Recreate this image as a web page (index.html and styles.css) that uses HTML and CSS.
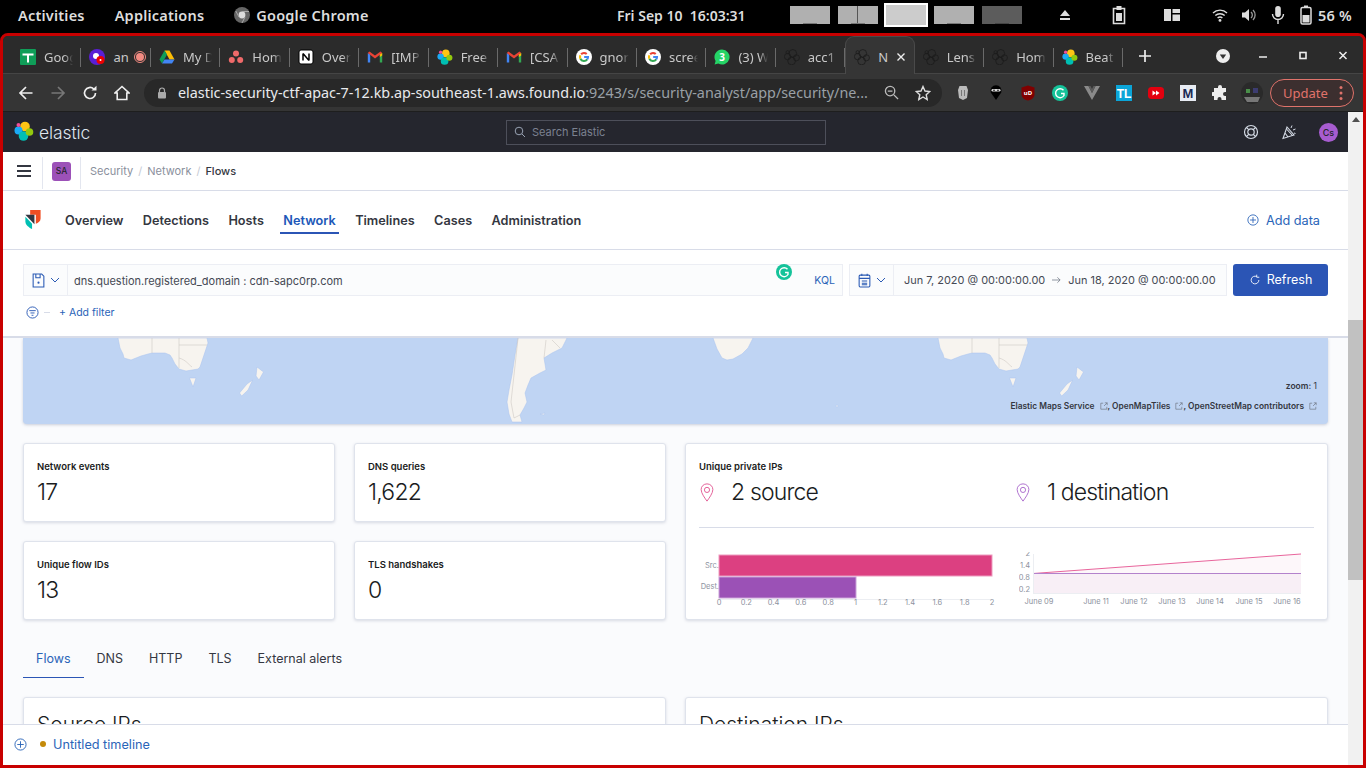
FILE: index.html
```html
<!DOCTYPE html>
<html lang="en">
<head>
<meta charset="utf-8">
<title>Network - Flows</title>
<link rel="stylesheet" href="styles.css">
</head>
<body>
<svg class="defs" width="0" height="0" aria-hidden="true">
  <defs>
    <symbol id="elk" viewBox="0 0 20 20">
      <circle class="b1" cx="11" cy="5.500" r="4.800"/>
      <circle class="b2" cx="4.500" cy="9.500" r="4"/>
      <circle class="b3" cx="9.500" cy="15" r="4.800"/>
      <circle class="b4" cx="15.500" cy="11" r="3.800"/>
      <circle class="b5" cx="4.500" cy="4" r="2"/>
    </symbol>
    <symbol id="g" viewBox="0 0 20 20">
      <circle cx="10" cy="10" r="10" fill="#fff"/>
      <path d="M6.400 6.600A5 5 0 0 1 13.400 6.300" fill="none" stroke="#ea4335" stroke-width="2.600"/>
      <path d="M5.500 12.200a5 5 0 0 1 0-4.400" fill="none" stroke="#fbbc05" stroke-width="2.600"/>
      <path d="M14 13a5 5 0 0 1-8.500-.8" fill="none" stroke="#34a853" stroke-width="2.600"/>
      <path d="M10.200 10H15a5 5 0 0 1-1 3" fill="none" stroke="#4285f4" stroke-width="2.600"/>
    </symbol>
    <symbol id="m" viewBox="0 0 20 16">
      <path d="M1 15V3l3 2v10z" fill="#4285f4"/>
      <path d="M19 15V3l-3 2v10z" fill="#34a853"/>
      <path d="M1 3l9 7 9-7-2-2-7 5-7-5z" fill="#ea4335"/>
      <path d="M16 5l3-2v3l-3 2z" fill="#fbbc05"/>
    </symbol>
    <symbol id="pin" viewBox="0 0 16 22">
      <path d="M8 1C4 1 1.200 4 1.200 7.600 1.200 12 6 18 8 21c2-3 6.800-9 6.800-13.400C14.800 4 12 1 8 1z" fill="none" stroke="currentColor" stroke-width="1"/>
      <circle cx="8" cy="8" r="3" fill="none" stroke="currentColor" stroke-width="1"/>
    </symbol>
    <symbol id="ext" viewBox="0 0 10 10">
      <path d="M4 1.500H1v7.500h7.500V6M5 5l4-4M6 1h3v3" fill="none" stroke="#69707d" stroke-width=".8"/>
    </symbol>
    <symbol id="plusc" viewBox="0 0 14 14">
      <circle cx="7" cy="7" r="6" fill="none" stroke="currentColor"/>
      <path d="M7 3.500v7M3.500 7h7" fill="none" stroke="currentColor"/>
    </symbol>
  </defs>
</svg>

<header class="panel">
  <div class="panel-left">
    <span>Activities</span>
    <span>Applications</span>
    <span class="app-name">
      <svg class="chrome-ico" viewBox="0 0 16 16"><circle cx="8" cy="8" r="8" fill="#666"/><circle cx="8" cy="8" r="3.400" fill="#ddd"/><path d="M8 4.500h7M5 10L1.800 4M11 10l-3 6" stroke="#aaa" fill="none"/></svg>
      Google Chrome
    </span>
  </div>
  <div class="panel-clock">Fri Sep 10&nbsp;&nbsp;16:03:31</div>
  <div class="workspaces">
    <span class="ws"><i></i></span>
    <span class="ws ws-split"><i></i></span>
    <span class="ws ws-current"></span>
    <span class="ws"><i></i></span>
    <span class="ws ws-dark"><i></i></span>
  </div>
  <div class="tray">
    <svg class="tray-eject" viewBox="0 0 12 12"><path d="M6 1l5 6H1zM1 9h10v2H1z" fill="#ddd"/></svg>
    <svg class="tray-clip" viewBox="0 0 14 20"><path d="M1.500 3.500h11v15h-11z" fill="none" stroke="#ddd" stroke-width="1.600"/><path d="M4.500 1h5v4h-5zM4 8h6v8H4z" fill="#ddd"/></svg>
    <svg class="tray-wm" viewBox="0 0 16 12"><path d="M0 0h7v12H0zM8.500 0H16v4H8.500zM8.500 5.500H16V12H8.500z" fill="#ddd"/></svg>
    <svg class="tray-wifi" viewBox="0 0 16 14"><path d="M1 5a10 10 0 0 1 14 0M3.300 7.500a7 7 0 0 1 9.400 0M5.600 10a3.600 3.600 0 0 1 4.800 0" fill="none" stroke="#ddd" stroke-width="1.400"/><circle cx="8" cy="12.400" r="1.400" fill="#ddd"/></svg>
    <svg class="tray-vol" viewBox="0 0 16 16"><path d="M1 5.500h3L8 2v12L4 10.500H1z" fill="#ddd"/><path d="M10 5a4 4 0 0 1 0 6M12 3a7 7 0 0 1 0 10" fill="none" stroke="#999" stroke-width="1.300"/></svg>
    <svg class="tray-mic" viewBox="0 0 14 20"><rect x="4.200" y="1" width="5.600" height="11" rx="2.800" fill="#ddd"/><path d="M1.500 9a5.500 5.500 0 0 0 11 0M7 14.500V19" fill="none" stroke="#ddd" stroke-width="1.400"/></svg>
    <svg class="tray-bat" viewBox="0 0 12 20"><path d="M4 .5h4v2H4z" fill="#ddd"/><rect x="1" y="2.500" width="10" height="16.500" rx="1.500" fill="none" stroke="#ddd" stroke-width="1.500"/><rect x="2.500" y="10" width="7" height="7.500" fill="#ddd"/></svg>
    <span class="bat-text">56 %</span>
  </div>
</header>

<div class="window">
  <div class="tabstrip">
    <div class="tab"><svg class="fav" viewBox="0 0 16 16"><rect width="16" height="16" rx="1" fill="#0f9d58"/><path d="M2.500 4.500h11v2h-11zM7 6h2v7.500H7z" fill="#fff"/></svg><span class="tab-t">Goog</span></div>
    <div class="tab"><svg class="fav" viewBox="0 0 16 16"><circle cx="8" cy="8" r="8" fill="#5a1fd6"/><circle cx="7" cy="7" r="3" fill="#fff"/><circle cx="11.500" cy="11" r="4" fill="#e00"/><circle cx="11.500" cy="11" r="1" fill="#fff"/></svg><span class="tab-t tab-short">an</span><svg class="fav-rec" viewBox="0 0 12 12"><circle cx="6" cy="6" r="5.500" fill="none" stroke="#f28b82"/><circle cx="6" cy="6" r="4" fill="#f28b82"/></svg></div>
    <div class="tab"><svg class="fav" viewBox="0 0 16 16"><path d="M5.500 1.500h5l5 9h-5z" fill="#fbbc05"/><path d="M5.500 1.500L.5 10.500l2.500 4 5-9z" fill="#0f9d58"/><path d="M3 14.500h10l2.500-4h-10z" fill="#4285f4"/></svg><span class="tab-t">My D</span></div>
    <div class="tab"><svg class="fav" viewBox="0 0 16 16"><circle cx="8" cy="4.500" r="3" fill="#f06a6a"/><circle cx="3.800" cy="11" r="3" fill="#f06a6a"/><circle cx="12.200" cy="11" r="3" fill="#f06a6a"/></svg><span class="tab-t">Hom</span></div>
    <div class="tab"><svg class="fav" viewBox="0 0 16 16"><rect x="1" y="1" width="14" height="14" rx="2" fill="#fff" stroke="#000"/><path d="M5 4.500v7M5 4.500l6 7M11 4.500v7" stroke="#000" stroke-width="1.500" fill="none"/></svg><span class="tab-t">Over</span></div>
    <div class="tab"><svg class="fav" viewBox="0 0 20 16"><use href="#m"/></svg><span class="tab-t">[IMP</span></div>
    <div class="tab"><svg class="fav" viewBox="0 0 20 20"><use href="#elk"/></svg><span class="tab-t">Free</span></div>
    <div class="tab"><svg class="fav" viewBox="0 0 20 16"><use href="#m"/></svg><span class="tab-t">[CSA</span></div>
    <div class="tab"><svg class="fav" viewBox="0 0 20 20"><use href="#g"/></svg><span class="tab-t">gnor</span></div>
    <div class="tab"><svg class="fav" viewBox="0 0 20 20"><use href="#g"/></svg><span class="tab-t">scree</span></div>
    <div class="tab"><svg class="fav" viewBox="0 0 16 16"><path d="M8 .5a7.500 7.500 0 0 0-6.400 11.400L.6 15.500l3.700-1A7.500 7.500 0 1 0 8 .5z" fill="#25d366"/><text x="8" y="11.500" class="wa-n">3</text></svg><span class="tab-t">(3) W</span></div>
    <div class="tab"><svg class="fav elk-dark" viewBox="0 0 20 20"><use href="#elk"/></svg><span class="tab-t">acc1</span></div>
    <div class="tab tab-active"><svg class="fav elk-dark" viewBox="0 0 20 20"><use href="#elk"/></svg><span class="tab-t tab-short">N</span><svg class="tab-x" viewBox="0 0 10 10"><path d="M1.500 1.500l7 7M8.500 1.500l-7 7" stroke="#eee" stroke-width="1.400"/></svg></div>
    <div class="tab"><svg class="fav elk-dark" viewBox="0 0 20 20"><use href="#elk"/></svg><span class="tab-t">Lens</span></div>
    <div class="tab"><svg class="fav elk-dark" viewBox="0 0 20 20"><use href="#elk"/></svg><span class="tab-t">Hom</span></div>
    <div class="tab"><svg class="fav" viewBox="0 0 20 20"><use href="#elk"/></svg><span class="tab-t">Beat</span></div>
    <svg class="newtab" viewBox="0 0 12 12"><path d="M6 0v12M0 6h12" stroke="#eee" stroke-width="1.700"/></svg>
    <div class="winctl">
      <svg class="tabsearch" viewBox="0 0 14 14"><circle cx="7" cy="7" r="7" fill="#eee"/><path d="M3.800 5.500h6.400L7 10z" fill="#333"/></svg>
      <svg class="wbtn" viewBox="0 0 10 10"><path d="M1 6h8" stroke="#eee" stroke-width="1.600"/></svg>
      <svg class="wbtn" viewBox="0 0 10 10"><rect x="2" y="1.500" width="6" height="6" fill="none" stroke="#eee" stroke-width="1.600"/></svg>
      <svg class="wbtn" viewBox="0 0 10 10"><path d="M1.500 1l7 7M8.500 1l-7 7" stroke="#eee" stroke-width="1.500"/></svg>
    </div>
  </div>

  <div class="toolbar">
    <div class="navbtns">
      <svg class="tb-ico" viewBox="0 0 16 16"><path d="M14.500 8H2M8 2L2 8l6 6" fill="none" stroke="#eee" stroke-width="1.700"/></svg>
      <svg class="tb-ico" viewBox="0 0 16 16"><path d="M1.500 8H14M8 2l6 6-6 6" fill="none" stroke="#777" stroke-width="1.700"/></svg>
      <svg class="tb-ico" viewBox="0 0 16 16"><path d="M13.500 8A5.500 5.500 0 1 1 11.800 4" fill="none" stroke="#eee" stroke-width="1.700"/><path d="M9.500 5.500H14.500V.8z" fill="#eee"/></svg>
      <svg class="tb-ico" viewBox="0 0 16 16"><path d="M8 1.500L1 8h2.200v6.500h9.600V8H15z" fill="none" stroke="#eee" stroke-width="1.600"/></svg>
    </div>
    <div class="omnibox">
      <svg class="lock" viewBox="0 0 10 12"><path d="M2.500 5V3.500a2.500 2.500 0 0 1 5 0V5" fill="none" stroke="#aaa" stroke-width="1.200"/><rect x="1" y="5" width="8" height="6.500" rx="1" fill="#aaa"/></svg>
      <span class="url">elastic-security-ctf-apac-7-12.kb.ap-southeast-1.aws.found.io<span class="url-dim">:9243/s/security-analyst/app/security/ne...</span></span>
      <svg class="omni-zoom" viewBox="0 0 16 16"><circle cx="6.500" cy="6.500" r="5" fill="none" stroke="#bbb" stroke-width="1.400"/><path d="M10.500 10.500L15 15M4 6.500h5" stroke="#bbb" stroke-width="1.400"/></svg>
      <svg class="omni-star" viewBox="0 0 16 16"><path d="M8 1.500l2 4.500 4.800.5-3.600 3.200 1 4.800L8 12l-4.200 2.500 1-4.800L1.200 6.500 6 6z" fill="none" stroke="#ddd" stroke-width="1.400"/></svg>
    </div>
    <div class="exts">
      <svg class="ext" viewBox="0 0 16 16"><path d="M4.500 1h7l1.500 4-1 8L8 15l-4-2-1-8z" fill="#bbb"/><path d="M6 5h1v6H6zM9 5h1v6H9z" fill="#777"/></svg>
      <svg class="ext" viewBox="0 0 16 16"><path d="M8 15L2.800 7.500a5.500 5.500 0 1 1 10.400 0z" fill="#000"/><rect x="3.500" y="4" width="9" height="2.600" rx="1.300" fill="#ddd"/><circle cx="6" cy="5.300" r=".8"/><circle cx="10" cy="5.300" r=".8"/></svg>
      <svg class="ext" viewBox="0 0 16 16"><path d="M8 0.500l6.500 2v7c0 3-3 5.500-6.500 6-3.500-.5-6.500-3-6.500-6v-7z" fill="#800000"/><text x="8" y="10" class="ext-ub">uD</text></svg>
      <svg class="ext" viewBox="0 0 16 16"><circle cx="8" cy="8" r="8" fill="#15c39a"/><path d="M11.500 5.200A4.500 4.500 0 1 0 12 10.500L12 8.500H9" fill="none" stroke="#fff" stroke-width="1.400"/></svg>
      <svg class="ext" viewBox="0 0 16 16"><path d="M0 1h4.500L8 8l3.500-7H16L8 15z" fill="#8a8a8a"/><path d="M4.500 1L8 8l3.500-7H9.500L8 4 6.500 1z" fill="#5c5c5c"/></svg>
      <svg class="ext" viewBox="0 0 16 16"><rect width="16" height="16" fill="#0ba5d8"/><text x="8" y="13" class="ext-tl">TL</text></svg>
      <svg class="ext" viewBox="0 0 16 16"><rect y="2" width="16" height="12" rx="3.500" fill="#e3000f"/><path d="M4.500 5.500L8 8 4.500 10.500zM8 5.500L11.500 8 8 10.500z" fill="#fff"/></svg>
      <svg class="ext" viewBox="0 0 16 16"><rect width="16" height="16" fill="#e8ecf3"/><text x="8" y="13" class="ext-m">M</text></svg>
      <svg class="ext" viewBox="0 0 16 16"><path d="M6 3V2a2 2 0 0 1 4 0v1h4v4h-1a2 2 0 0 0 0 4h1v4H9.500v-1a2 2 0 0 0-4 0v1H2v-4H1a2 2 0 0 1 0-4h1V3z" fill="#eee"/></svg>
      <svg class="avatar" viewBox="0 0 22 22"><circle cx="11" cy="11" r="11" fill="#2a2a2a"/><path d="M3 15h16l-2 5H6z" fill="#777"/><rect x="5" y="7" width="4" height="4" fill="#4a8f4a"/><rect x="12" y="6" width="5" height="5" fill="#3c3c70"/></svg>
    </div>
    <div class="update"><span>Update</span><svg class="dots" viewBox="0 0 4 16"><circle cx="2" cy="2.500" r="1.500"/><circle cx="2" cy="8" r="1.500"/><circle cx="2" cy="13.500" r="1.500"/></svg></div>
  </div>

  <div class="viewport">
    <div class="app">
      <div class="kbn-head">
        <div class="kbn-logo"><svg class="elk-logo" viewBox="0 0 20 20"><use href="#elk"/></svg><span>elastic</span></div>
        <div class="kbn-search">
          <svg class="search-ico" viewBox="0 0 12 12"><circle cx="5" cy="5" r="3.800" fill="none" stroke="#98a2b3"/><path d="M8 8l3 3" stroke="#98a2b3"/></svg>
          <span>Search Elastic</span>
        </div>
        <div class="kbn-icons">
          <svg class="kbn-ico" viewBox="0 0 16 16"><circle cx="8" cy="8" r="6.500" fill="none" stroke="#d4dae5" stroke-width="1.200"/><circle cx="8" cy="8" r="3.200" fill="none" stroke="#d4dae5" stroke-width="1.200"/><path d="M3.500 3.500l2.200 2.200M12.500 3.500l-2.200 2.200M3.500 12.500l2.200-2.200M12.500 12.500l-2.200-2.200" stroke="#d4dae5" stroke-width="1.200"/></svg>
          <svg class="kbn-ico" viewBox="0 0 16 16"><path d="M2 14.500L6 3l7 8zM4 9l3 4M6 5.500l5 5.500" fill="none" stroke="#d4dae5" stroke-width="1.100"/><path d="M10 4l1-2.500M12 6l2.500-1M13 9l1.500.5" stroke="#d4dae5"/></svg>
          <span class="user">Cs</span>
        </div>
      </div>

      <div class="crumbs">
        <div class="burger"><i></i><i></i><i></i></div>
        <div class="space-cell"><span class="space">SA</span></div>
        <nav class="crumb-list"><span>Security</span><b>/</b><span>Network</span><b>/</b><strong>Flows</strong></nav>
      </div>

      <div class="secnav">
        <svg class="sec-logo" viewBox="0 0 16 20"><path d="M5 0h11v9c0 3-2.500 4.500-5 5.500V5H5z" fill="#f04e23"/><path d="M0 5h9.500v10z" fill="#343741"/><path d="M0 7v5c0 4 3.500 6 7 8v-5.500z" fill="#00bfb3"/></svg>
        <a>Overview</a><a>Detections</a><a>Hosts</a><a class="on">Network</a><a>Timelines</a><a>Cases</a><a>Administration</a>
        <span class="add-data"><svg class="plus-ico" viewBox="0 0 14 14"><use href="#plusc"/></svg>Add data</span>
      </div>

      <div class="qbar">
        <div class="qrow">
          <div class="qinput">
            <div class="seg"><svg class="seg-ico" viewBox="0 0 12 14"><path d="M1 1h8l2 2v10H1z" fill="none" stroke="#2a5ab4"/><path d="M3.500 1v3.500h4V1" fill="none" stroke="#2a5ab4"/><circle cx="6" cy="9" r="1" fill="#2a5ab4"/></svg><svg class="chev" viewBox="0 0 10 6"><path d="M1 1l4 4 4-4" fill="none" stroke="#2a5ab4"/></svg></div>
            <span class="qtext">dns.question.registered_domain : cdn-sapc0rp.com</span>
            <span class="kql">KQL</span>
            <svg class="gram" viewBox="0 0 16 16"><circle cx="8" cy="8" r="8" fill="#15c39a"/><path d="M11.500 5.200A4.500 4.500 0 1 0 12 10.500L12 8.500H9" fill="none" stroke="#fff" stroke-width="1.400"/></svg>
          </div>
          <div class="qdate">
            <div class="seg"><svg class="seg-ico" viewBox="0 0 12 14"><rect x="1" y="2" width="10" height="11" rx="1" fill="none" stroke="#2a5ab4"/><path d="M1 5h10M3.500 7.500h5M3.500 9.500h5M3.500 11h5M3.500 .8v2M8.500 .8v2" stroke="#2a5ab4" fill="none"/></svg><svg class="chev" viewBox="0 0 10 6"><path d="M1 1l4 4 4-4" fill="none" stroke="#2a5ab4"/></svg></div>
            <div class="dates"><span>Jun 7, 2020 @ 00:00:00.00</span><svg class="arrow" viewBox="0 0 10 8"><path d="M0 4h9M6 1l3 3-3 3" fill="none" stroke="#69707d" stroke-width=".8"/></svg><span>Jun 18, 2020 @ 00:00:00.00</span></div>
          </div>
          <div class="refresh"><svg class="ref-ico" viewBox="0 0 14 14"><path d="M11.500 7A4.500 4.500 0 1 1 9 3" fill="none" stroke="#fff"/><path d="M9 .8V3.800H12" fill="none" stroke="#fff"/></svg>Refresh</div>
        </div>
        <div class="frow">
          <svg class="filter-ico" viewBox="0 0 14 14"><circle cx="7" cy="7" r="6" fill="none" stroke="#2a5ab4"/><path d="M3.500 5h7M4.800 7.500h4.400M6 10h2" stroke="#2a5ab4"/></svg>
          <i class="dash"></i>
          <span class="add-filter">+ Add filter</span>
        </div>
      </div>

      <main class="content">
        <div class="map">
          <svg class="map-svg" viewBox="23 338 1305 86" preserveAspectRatio="none">
            <defs>
              <g id="oz">
                <path class="land" d="M118 338L120 348 123 354 124 358 131 360 136 358 141 356 148 354 152 353 165 353 170 355 172 358 175 364 179 369 186 371 192 370 198 369 200 367 203 358 205 352 208 343 207 338z"/>
                <path class="border" d="M152 338V353M179 338V368M179 345H207M179 358C186 360 188 364 192 367"/>
                <path class="land" d="M189.500 378L196 378 193 387z"/>
                <path class="land" d="M257 367L263.500 372 259 380 256 376zM252.600 380L248 390 241.700 396 239.500 393 247 384z"/>
              </g>
            </defs>
            <use href="#oz"/>
            <use href="#oz" x="820"/>
            <path class="land" d="M518 338L515 355 512 375 509 390 507 402 509 414 512 422 522 422 520 415 524 408 527 402 525 393 528 385 531 378 540 373 546 370 544 358 552 353 562 348 567 338z"/>
            <path class="border" d="M518 338L514 375 511 402 514 418 520 415M546 340L544 358M552 340L560 348"/>
            <path class="land" d="M540 414l5-1-1 2z"/>
            <path class="land" d="M713 338L717 349 722 358 727 360 733 359 742 354 748 348 753 338z"/>
            <circle class="land" cx="837" cy="406" r="1"/>
          </svg>
          <div class="map-zoom"><b>zoom:</b> 1</div>
          <div class="map-attr"><span>Elastic Maps Service</span><svg class="ext-ico"><use href="#ext"/></svg><span>, OpenMapTiles</span><svg class="ext-ico"><use href="#ext"/></svg><span>, OpenStreetMap contributors</span><svg class="ext-ico"><use href="#ext"/></svg></div>
        </div>

        <div class="kpis">
          <section class="card kpi"><h3>Network events</h3><p>17</p></section>
          <section class="card kpi"><h3>DNS queries</h3><p>1,622</p></section>
          <section class="card ips">
            <h3>Unique private IPs</h3>
            <div class="ip-stats">
              <div class="ip-stat"><svg class="pin pin-src"><use href="#pin"/></svg><span>2 source</span></div>
              <div class="ip-stat"><svg class="pin pin-dst"><use href="#pin"/></svg><span>1 destination</span></div>
            </div>
            <hr class="rule">
            <div class="charts">
              <svg class="chart-bar" viewBox="0 0 300 66">
                <path class="axis" d="M20 47.500H293"/>
                <text class="lbl end" x="20" y="16">Src.</text>
                <text class="lbl end" x="20" y="37">Dest.</text>
                <rect class="bar-src" x="20" y="3" width="273" height="21"/>
                <rect class="bar-dst" x="20" y="25" width="137" height="21"/>
                <text class="lbl mid" x="20" y="53">0</text><text class="lbl mid" x="47.300" y="53">0.2</text><text class="lbl mid" x="74.600" y="53">0.4</text><text class="lbl mid" x="101.900" y="53">0.6</text><text class="lbl mid" x="129.200" y="53">0.8</text><text class="lbl mid" x="156.500" y="53">1</text><text class="lbl mid" x="183.800" y="53">1.2</text><text class="lbl mid" x="211.100" y="53">1.4</text><text class="lbl mid" x="238.400" y="53">1.6</text><text class="lbl mid" x="265.700" y="53">1.8</text><text class="lbl mid" x="293" y="53">2</text>
              </svg>
              <svg class="chart-area" viewBox="0 0 295 66">
                <path class="area-src" d="M14 21.500L282 2V41H14z"/>
                <path class="area-dst" d="M14 21.500H282V41H14z"/>
                <path class="line-src" d="M14 21.500L282 2"/>
                <path class="line-dst" d="M14 21.500H282"/>
                <path class="axis" d="M14.500 2V41M14 41.500H282"/>
                <text class="lbl end" x="11" y="4">2</text><text class="lbl end" x="11" y="16">1.4</text><text class="lbl end" x="11" y="28">0.8</text><text class="lbl end" x="11" y="40">0.2</text>
                <text class="lbl mid" x="20" y="52">June 09</text><text class="lbl mid" x="77" y="52">June 11</text><text class="lbl mid" x="115" y="52">June 12</text><text class="lbl mid" x="153" y="52">June 13</text><text class="lbl mid" x="191" y="52">June 14</text><text class="lbl mid" x="230" y="52">June 15</text><text class="lbl mid" x="268" y="52">June 16</text>
              </svg>
            </div>
          </section>
          <section class="card kpi"><h3>Unique flow IDs</h3><p>13</p></section>
          <section class="card kpi"><h3>TLS handshakes</h3><p>0</p></section>
        </div>

        <div class="subtabs">
          <a class="on">Flows</a><a>DNS</a><a>HTTP</a><a>TLS</a><a>External alerts</a>
        </div>

        <div class="tables">
          <section class="card tbl"><h2>Source IPs</h2></section>
          <section class="card tbl"><h2>Destination IPs</h2></section>
        </div>
      </main>

      <footer class="timeline">
        <svg class="tl-plus" viewBox="0 0 14 14"><use href="#plusc"/></svg>
        <i class="tl-dot"></i>
        <span>Untitled timeline</span>
      </footer>
    </div>
    <div class="scrollbar">
      <svg class="sb-up" viewBox="0 0 8 5"><path d="M4 0l4 5H0z" fill="#505050"/></svg>
      <div class="sb-thumb"></div>
    </div>
  </div>
</div>
</body>
</html>
```

FILE: styles.css
```css
* { box-sizing: border-box; }
html, body { margin: 0; padding: 0; }
body { width: 1366px; height: 768px; overflow: hidden; background: #000; font-family: "Noto Sans", sans-serif; }
.defs { display: block; height: 0; }

/* desktop panel */
.panel { height: 33px; display: flex; align-items: center; color: #ddd; font-size: 14.500px; font-weight: 600; padding-bottom: 3px; letter-spacing: .2px; }
.panel-left { display: flex; align-items: center; gap: 30px; padding-left: 18px; width: 617px; flex: none; }
.app-name { display: flex; align-items: center; gap: 6px; }
.chrome-ico { width: 16px; height: 16px; }
.panel-clock { width: 173px; white-space: nowrap; flex: none; letter-spacing: 0; font-size: 14px; }
.workspaces { display: flex; gap: 8px; align-items: center; width: 258px; flex: none; }
.ws { width: 40px; height: 18px; background: #b0b0b0; position: relative; display: block; flex: none; }
.ws i { position: absolute; left: 13px; bottom: 0; width: 14px; height: 1px; background: #777; }
.ws-split { background: linear-gradient(to right, #b0b0b0 19px, #555 19px, #555 20px, #b0b0b0 20px); }
.ws-current { background: #ccc; outline: 2px solid #fff; outline-offset: -1px; width: 42px; height: 22px; margin: 0 -1px; }
.ws-dark { background: #5c5c5c; }
.ws-dark i { background: #444; }
.tray { display: flex; align-items: center; flex: 1; }
.tray-eject { width: 12px; height: 12px; margin-left: 11px; }
.tray-clip { width: 14px; height: 20px; margin-left: 41px; }
.tray-wm { width: 16px; height: 12px; margin-left: 38px; }
.tray-wifi { width: 16px; height: 14px; margin-left: 32px; }
.tray-vol { width: 16px; height: 16px; margin-left: 13px; }
.tray-mic { width: 14px; height: 20px; margin-left: 14px; }
.tray-bat { width: 12px; height: 20px; margin-left: 15px; }
.bat-text { margin-left: 6px; letter-spacing: .2px; }

/* window */
.window { height: 735px; border: 3px solid #c80000; border-radius: 8px 8px 0 0; display: flex; flex-direction: column; background: #2a2a2a; overflow: hidden; }
.tabstrip { height: 38px; display: flex; align-items: center; padding-left: 9px; background: #2b2b2b; border-bottom: 1px solid #454545; color: #c9c9c9; }
.tab { width: 69.450px; height: 38px; flex: none; display: flex; align-items: center; padding: 4px 8px 0 8px; gap: 8px; position: relative; }
.tab::after { content: ""; position: absolute; right: 0; top: 12px; height: 19px; width: 1px; background: #6a6a6a; }
.tab-active { background: #353535; border-radius: 9px 9px 0 0; border: 1px solid #4a4a4a; border-bottom: 0; height: 38px; }
.tab-active::after { display: none; }
.fav { width: 16px; height: 16px; flex: none; }
.fav-rec { width: 12px; height: 12px; flex: none; margin-left: -3px; }
.tab-t { font-size: 13px; white-space: nowrap; flex: 1; overflow: hidden; -webkit-mask-image: linear-gradient(to right, #000 70%, transparent); mask-image: linear-gradient(to right, #000 70%, transparent); min-width: 0; }
.tab-short { flex: none; overflow: visible; -webkit-mask-image: none; mask-image: none; }
.tab-x { width: 10px; height: 10px; margin-left: auto; flex: none; }
.wa-n { font: 700 10px "Noto Sans", sans-serif; fill: #fff; text-anchor: middle; }
.newtab { width: 12px; height: 12px; margin-left: 16px; flex: none; margin-top: 2px; }
.winctl { display: flex; align-items: center; margin-left: 65px; margin-top: 2px; }
.tabsearch { width: 14px; height: 14px; margin-right: 28px; }
.wbtn { width: 10px; height: 10px; margin-right: 30px; }

/* elastic mark: colours pass into the symbol by custom properties */
.b1 { fill: var(--b1, #fec514); stroke: var(--bs, none); }
.b2 { fill: var(--b2, #1ba9f5); stroke: var(--bs, none); }
.b3 { fill: var(--b3, #00bfb3); stroke: var(--bs, none); }
.b4 { fill: var(--b4, #93c90e); stroke: var(--bs, none); }
.b5 { fill: var(--b5, #f04e98); stroke: var(--bs, none); }
.elk-dark { --b1: none; --b2: none; --b3: none; --b4: none; --b5: none; --bs: #1c1c1c; }

/* toolbar */
.toolbar { height: 38px; display: flex; align-items: center; background: #353535; border-bottom: 1px solid #1e1e1e; }
.navbtns { display: flex; align-items: center; gap: 16px; padding-left: 15px; }
.tb-ico { width: 16px; height: 16px; }
.omnibox { width: 798px; height: 28px; margin-left: 14px; background: #282828; border-radius: 14px; display: flex; align-items: center; padding-left: 13px; flex: none; }
.lock { width: 10px; height: 12px; flex: none; }
.url { font-size: 14.350px; color: #e8eaed; margin-left: 11px; white-space: nowrap; width: 690px; flex: none; }
.url-dim { color: #9aa0a6; }
.omni-zoom { width: 15px; height: 15px; margin-left: 16px; flex: none; }
.omni-star { width: 16px; height: 16px; margin-left: 16px; flex: none; }
.exts { display: flex; align-items: center; gap: 16px; padding-left: 13px; }
.ext { width: 16px; height: 16px; flex: none; }
.ext:nth-child(2) { margin-left: 1px; }
.avatar { width: 22px; height: 22px; margin-left: -3px; flex: none; }
.update { width: 84px; height: 28px; margin-left: 7px; border: 1px solid #e0736b; border-radius: 14px; background: #3c2f2f; color: #e0736b; font-size: 13px; display: flex; align-items: center; padding-left: 12px; flex: none; }
.update span { flex: 1; }
.dots { width: 4px; height: 16px; fill: #e0736b; margin-right: 10px; }
.ext-ub { font: 700 6px "Noto Sans", sans-serif; fill: #fff; text-anchor: middle; }
.ext-tl { font: 700 12px "Liberation Sans", sans-serif; fill: #fff; text-anchor: middle; }
.ext-m { font: 700 13px "Liberation Sans", sans-serif; fill: #1a2a55; text-anchor: middle; }

/* viewport */
.viewport { flex: 1; min-height: 0; display: flex; font-family: Inter, sans-serif; }
.app { flex: 1; min-width: 0; display: flex; flex-direction: column; background: #fafbfd; }
.scrollbar { width: 15px; background: #f1f1f1; position: relative; display: flex; flex-direction: column; align-items: center; flex: none; }
.sb-up { width: 8px; height: 5px; margin-top: 5px; }
.sb-thumb { width: 100%; height: 260px; background: #c1c1c1; position: absolute; top: 208px; }

/* kibana header */
.kbn-head { height: 40px; flex: none; background: #25262e; display: flex; align-items: center; padding: 0 11px; position: relative; }
.kbn-logo { display: flex; align-items: center; gap: 5px; color: #dfe5ef; font-size: 17.500px; width: 492px; font-weight: 300; letter-spacing: -.1px; flex: none; }
.elk-logo { width: 20px; height: 20px; margin-bottom: 2px; }
.kbn-search { width: 320px; height: 25px; border: 1px solid #4d4f5a; display: flex; align-items: center; color: #7b8190; font-size: 11px; padding-left: 7px; gap: 6px; background: #25262e; flex: none; }
.search-ico { width: 12px; height: 12px; }
.kbn-icons { display: flex; align-items: center; margin-left: 417px; gap: 22px; }
.kbn-ico { width: 16px; height: 16px; }
.user { width: 19px; height: 19px; border-radius: 50%; background: #a75cd0; color: #25262e; font-size: 9px; font-weight: 500; display: flex; align-items: center; justify-content: center; }

/* breadcrumbs */
.crumbs { height: 39px; flex: none; background: #fff; border-bottom: 1px solid #d8dce8; display: flex; align-items: center; }
.burger { width: 39px; padding-left: 14px; display: flex; flex-direction: column; gap: 3px; }
.burger i { display: block; width: 14px; height: 2px; background: #343741; }
.space-cell { width: 39px; height: 32px; border-left: 1px solid #e3e6ef; border-right: 1px solid #e3e6ef; display: flex; align-items: center; justify-content: center; margin-top: 4px; }
.space { width: 19px; height: 19px; border-radius: 3px; background: #9c51b8; color: #25262e; font-size: 8.500px; font-weight: 500; display: flex; align-items: center; justify-content: center; margin-top: -4px; }
.crumb-list { display: flex; align-items: center; gap: 5px; padding-left: 9px; font-size: 11px; color: #8a8f9c; }
.crumb-list b { font-weight: 400; color: #c5c9d3; }
.crumb-list strong { font-weight: 500; color: #343741; }

/* section nav */
.secnav { height: 59px; flex: none; background: #fff; border-bottom: 1px solid #d8dce8; display: flex; align-items: center; padding-left: 22px; position: relative; }
.sec-logo { width: 16px; height: 19px; margin-right: 24px; margin-bottom: 1px; flex: none; }
.secnav a { font-size: 12.700px; font-weight: 600; color: #343741; margin-right: 19.400px; height: 27px; padding-top: 6px; margin-top: 1px; white-space: nowrap; }
.secnav a.on { color: #2057b8; border-bottom: 2px solid #2b55b5; margin: 1px 16.400px 0 -3px; padding: 6px 3px 0; height: 27px; }
.add-data { margin-left: auto; margin-right: 28px; color: #2a64b8; font-size: 12.700px; display: flex; align-items: center; gap: 7px; }
.plus-ico { width: 12px; height: 12px; color: #2a64b8; }

/* query bar */
.qbar { height: 88px; flex: none; background: #fff; border-bottom: 2px solid #d8dce8; padding: 14px 20px 0; }
.qrow { display: flex; gap: 6px; height: 32px; }
.qinput, .qdate { display: flex; align-items: center; background: #fbfcfd; border: 1px solid #eceef4; position: relative; height: 32px; flex: none; }
.qinput { width: 820px; }
.qdate { width: 378px; }
.seg { width: 44px; height: 100%; border-right: 1px solid #eceef4; display: flex; align-items: center; justify-content: center; gap: 5px; flex: none; }
.seg-ico { width: 13px; height: 15px; }
.chev { width: 10px; height: 6px; }
.qtext { font-size: 11px; color: #454954; padding: 1px 0 0 6px; flex: 1; white-space: nowrap; }
.kql { font-size: 10.500px; color: #2a64b8; margin-right: 7px; padding-top: 1px; }
.gram { width: 16px; height: 16px; position: absolute; left: 752px; top: -1px; }
.dates { display: flex; align-items: center; font-size: 10.950px; color: #454954; padding: 0 0 1px 10px; white-space: nowrap; gap: 7px; }
.arrow { width: 9px; height: 8px; }
.refresh { width: 95px; height: 32px; background: #2b55b5; border-radius: 3px; color: #fff; font-size: 12.500px; display: flex; align-items: center; justify-content: center; gap: 6px; padding-bottom: 1px; flex: none; }
.ref-ico { width: 12px; height: 12px; }
.frow { display: flex; align-items: center; padding: 10px 0 0 3px; gap: 5px; }
.filter-ico { width: 13px; height: 13px; }
.dash { width: 6px; height: 1px; background: #d8dce8; }
.add-filter { font-size: 10.500px; color: #2a64b8; margin-left: 4px; }

/* content */
.content { flex: 1; min-height: 0; overflow: hidden; padding: 0 20px; }
.map { height: 86px; background: #bfd4f3; border-radius: 0 0 4px 4px; position: relative; box-shadow: 0 1px 3px rgba(60,70,110,.25); }
.map-svg { display: block; width: 100%; height: 86px; }
.land { fill: #f7f4ef; stroke: #a8c3ee; stroke-width: .5; }
.border { fill: none; stroke: #cfcac4; stroke-width: .6; }
.map-zoom { position: absolute; right: 11px; top: 43px; font-size: 8.500px; color: #343741; }
.map-zoom b { font-weight: 600; }
.map-attr { position: absolute; right: 11px; top: 63px; font-size: 8.400px; font-weight: 600; color: #343741; display: flex; align-items: center; }
.ext-ico { width: 8px; height: 8px; margin-left: 5px; }

.kpis { display: grid; grid-template-columns: 312px 312px 643px; grid-template-rows: 79px 79px; gap: 19px; margin-top: 19px; }
.card { background: #fff; border: 1px solid #dfe3ec; border-radius: 3px; box-shadow: 0 1px 3px rgba(60,70,110,.18); min-width: 0; }
.kpi { padding: 17px 13px; }
.kpi h3, .ips h3 { margin: 0; font-size: 9.500px; font-weight: 600; color: #1a1c21; line-height: 12px; }
.kpi p { margin: 5px 0 0; font-size: 23px; font-weight: 300; color: #1a1c21; line-height: 28px; letter-spacing: -.8px; }
.ips { grid-column: 3; grid-row: 1 / span 2; padding: 17px 13px 0; }
.ip-stats { display: flex; margin-top: 5px; }
.ip-stat { width: 316px; flex: none; display: flex; align-items: center; height: 28px; font-size: 23px; font-weight: 300; color: #1a1c21; gap: 16px; letter-spacing: -.85px; }
.pin { width: 16px; height: 19px; flex: none; }
.pin-src { color: #e04a8a; }
.pin-dst { color: #a45ec9; }
.rule { border: 0; border-top: 1px solid #d8dce8; margin: 21px 0 0; }
.charts { display: flex; margin-top: 24px; }
.chart-bar { width: 300px; height: 66px; flex: none; }
.chart-area { width: 295px; height: 66px; flex: none; margin-left: 20px; }
.lbl { font: 400 7.500px Inter, sans-serif; fill: #8d929e; }
.end { text-anchor: end; }
.mid { text-anchor: middle; }
.axis { stroke: #eceef2; fill: none; }
.bar-src { fill: #dc4081; stroke: #ee9cbf; stroke-width: 1; }
.bar-dst { fill: #9b51b6; stroke: #c9a2d8; stroke-width: 1; }
.area-src { fill: #fdf7fa; }
.area-dst { fill: #f8eff6; }
.line-src { stroke: #e8659c; fill: none; }
.line-dst { stroke: #b382cc; fill: none; }

.subtabs { display: flex; height: 38px; margin-top: 20px; font-size: 12.500px; color: #343741; }
.subtabs a { padding: 11px 13px 0; height: 38px; }
.subtabs a.on { color: #2a64b8; border-bottom: 1px solid #2b55b5; }
.tables { display: grid; grid-template-columns: 643px 643px; gap: 19px; margin-top: 19px; }
.tbl { height: 120px; padding: 14px 13px; }
.tbl h2 { margin: 0; font-size: 21px; font-weight: 300; color: #1a1c21; }

/* timeline */
.timeline { height: 41px; flex: none; background: #fff; border-top: 1px solid #d8dce8; display: flex; align-items: center; padding: 0 0 2px 11px; color: #2a64b8; font-size: 12.700px; }
.tl-plus { width: 13px; height: 13px; color: #2a64b8; }
.tl-dot { width: 6px; height: 6px; border-radius: 50%; background: #c48a0a; margin-left: 13px; margin-right: 7px; }
```
